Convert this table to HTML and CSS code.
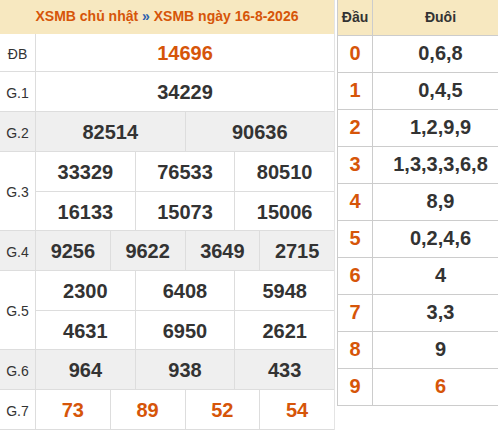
FILE: index.html
```html
<!DOCTYPE html>
<html lang="vi">
<head>
    <meta charset="UTF-8">
    <meta name="viewport" content="width=device-width, initial-scale=1.0">
    <title>XSMB ngày 16-8-2026</title>
    <link rel="stylesheet" href="styles.css">
</head>
<body>
    <div class="wrap">
        <!-- Bang ket qua -->
        <div class="kq">
            <div class="kq-head">
                XSMB chủ nhật <span class="sep">»</span> XSMB ngày 16-8-2026
            </div>

            <div class="row">
                <div class="label">ĐB</div>
                <div class="nums">
                    <div class="line line-db">
                        <span class="num special">14696</span>
                    </div>
                </div>
            </div>

            <div class="row">
                <div class="label">G.1</div>
                <div class="nums">
                    <div class="line"><span class="num">34229</span></div>
                </div>
            </div>

            <div class="row gray">
                <div class="label">G.2</div>
                <div class="nums">
                    <div class="line">
                        <span class="num">82514</span>
                        <span class="num">90636</span>
                    </div>
                </div>
            </div>

            <div class="row">
                <div class="label">G.3</div>
                <div class="nums">
                    <div class="line">
                        <span class="num">33329</span>
                        <span class="num">76533</span>
                        <span class="num">80510</span>
                    </div>
                    <div class="line">
                        <span class="num">16133</span>
                        <span class="num">15073</span>
                        <span class="num">15006</span>
                    </div>
                </div>
            </div>

            <div class="row gray">
                <div class="label">G.4</div>
                <div class="nums">
                    <div class="line">
                        <span class="num">9256</span>
                        <span class="num">9622</span>
                        <span class="num">3649</span>
                        <span class="num">2715</span>
                    </div>
                </div>
            </div>

            <div class="row">
                <div class="label">G.5</div>
                <div class="nums">
                    <div class="line">
                        <span class="num">2300</span>
                        <span class="num">6408</span>
                        <span class="num">5948</span>
                    </div>
                    <div class="line">
                        <span class="num">4631</span>
                        <span class="num">6950</span>
                        <span class="num">2621</span>
                    </div>
                </div>
            </div>

            <div class="row gray">
                <div class="label">G.6</div>
                <div class="nums">
                    <div class="line">
                        <span class="num">964</span>
                        <span class="num">938</span>
                        <span class="num">433</span>
                    </div>
                </div>
            </div>

            <div class="row">
                <div class="label">G.7</div>
                <div class="nums">
                    <div class="line">
                        <span class="num special">73</span>
                        <span class="num special">89</span>
                        <span class="num special">52</span>
                        <span class="num special">54</span>
                    </div>
                </div>
            </div>
        </div>

        <!-- Bang dau duoi -->
        <table class="loto">
            <thead>
                <tr>
                    <th class="dau">Đầu</th>
                    <th>Đuôi</th>
                </tr>
            </thead>
            <tbody>
                <tr><td class="dau">0</td><td>0,6,8</td></tr>
                <tr><td class="dau">1</td><td>0,4,5</td></tr>
                <tr><td class="dau">2</td><td>1,2,9,9</td></tr>
                <tr><td class="dau">3</td><td>1,3,3,3,6,8</td></tr>
                <tr><td class="dau">4</td><td>8,9</td></tr>
                <tr><td class="dau">5</td><td>0,2,4,6</td></tr>
                <tr><td class="dau">6</td><td>4</td></tr>
                <tr><td class="dau">7</td><td>3,3</td></tr>
                <tr><td class="dau">8</td><td>9</td></tr>
                <tr><td class="dau">9</td><td class="special">6</td></tr>
            </tbody>
        </table>
    </div>
</body>
</html>
```

FILE: styles.css
```css
:root {
    --head-bg: #f7e8c0;
    --accent: #d65509;
    --text: #333333;
    --line: #dddddd;
    --line-dark: #cccccc;
    --gray-bg: #efefef;
}

* {
    margin: 0;
    padding: 0;
    box-sizing: border-box;
}

body {
    font-family: "Liberation Sans", Arial, sans-serif;
    color: var(--text);
    background: #ffffff;
    overflow: hidden;
}

.wrap {
    display: flex;
    align-items: flex-start;
    gap: 2px;
    width: 520px;
}

/* Bang ket qua */
.kq {
    width: 335px;
    flex-shrink: 0;
    border-right: 1px solid #e4e4e4;
}

.kq-head {
    height: 34px;
    line-height: 33px;
    background: var(--head-bg);
    color: var(--accent);
    font-size: 14px;
    font-weight: 700;
    text-align: center;
    white-space: nowrap;
}

.kq-head .sep {
    color: #2b5fae;
}

.row {
    display: flex;
    border-bottom: 1px solid var(--line);
}

.row.gray {
    background: var(--gray-bg);
}

.label {
    width: 36px;
    flex-shrink: 0;
    border-right: 1px solid var(--line);
    padding-top: 2px;
    font-size: 14px;
    display: flex;
    align-items: center;
    justify-content: center;
}

.nums {
    flex: 1;
    display: flex;
    flex-direction: column;
}

.line {
    display: flex;
    height: 39px;
}

.line.line-db {
    height: 37px;
}

.line + .line {
    border-top: 1px solid var(--line);
}

.num {
    flex: 1;
    display: flex;
    align-items: center;
    justify-content: center;
    padding-top: 2px;
    font-size: 20px;
    font-weight: 700;
}

.num + .num {
    border-left: 1px solid var(--line);
}

.special {
    color: var(--accent);
}

/* Bang dau duoi */
.loto {
    width: 172px;
    flex-shrink: 0;
    border-collapse: collapse;
}

.loto th,
.loto td {
    border: 1px solid var(--line-dark);
    text-align: center;
}

.loto tr:first-child th {
    border-top: none;
}

.loto th {
    height: 35px;
    background: var(--head-bg);
    font-size: 14px;
    font-weight: 700;
    color: var(--text);
}

.loto td {
    height: 37px;
    font-size: 20px;
    font-weight: 700;
}

.loto .dau {
    width: 35px;
}

.loto td.dau,
.loto td.special {
    color: var(--accent);
}
```
